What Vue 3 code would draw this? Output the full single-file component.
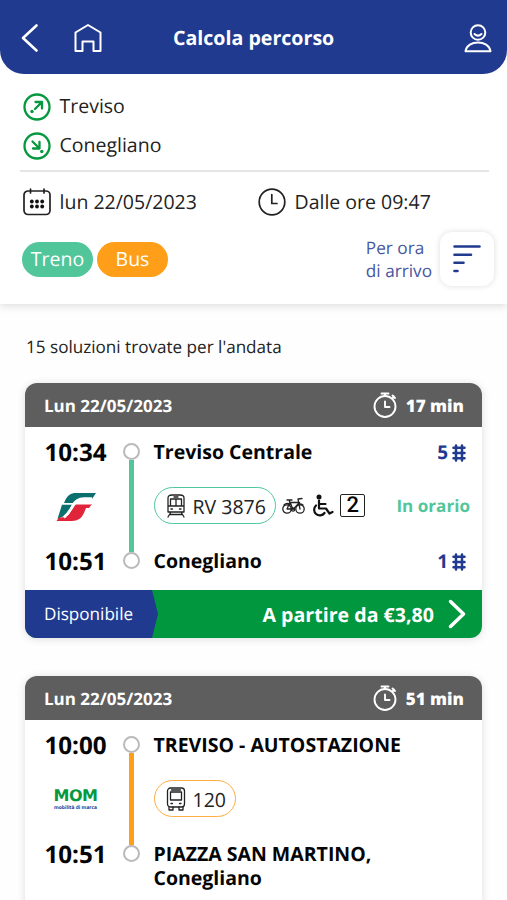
<script setup>
const trips = [
  {
    kind: 'train',
    duration: '17 min',
    start: '10:34',
    end: '10:51',
    from: 'Treviso Centrale',
    to: ['Conegliano'],
    line: 'RV 3876',
    fromTrack: '5',
    toTrack: '1',
    status: 'In orario',
    price: 'A partire da €3,80',
  },
  {
    kind: 'bus',
    duration: '51 min',
    start: '10:00',
    end: '10:51',
    from: 'TREVISO - AUTOSTAZIONE',
    to: ['PIAZZA SAN MARTINO,', 'Conegliano'],
    line: '120',
  },
]
</script>

<template>
  <div class="screen">
    <header class="topbar">
      <svg class="back" width="18" height="30" viewBox="0 0 18 30"><path d="M15.500 2.500 2 15l13.500 12.500" /></svg>
      <svg class="home" width="30" height="30" viewBox="0 0 30 30"><path d="M2.500 9.500 15 2l12.500 7.500V28h-7V18.500h-11V28h-7z" /></svg>
      <h1>Calcola percorso</h1>
      <svg class="user" width="30" height="30" viewBox="0 0 30 30">
        <circle cx="15" cy="9.500" r="7.300" />
        <path d="M11.500 11q3.500 3.200 7 0M2.500 28.200C3.500 22.500 9 19.500 15 19.500s11.500 3 12.500 8.700z" />
      </svg>
    </header>

    <section class="search">
      <div class="place">
        <svg class="dir" width="28" height="28" viewBox="0 0 28 28">
          <circle cx="14" cy="14" r="12.500" />
          <path d="m12 16 6.500-6.500M12.500 9h6.500v6.500" /><circle class="dot" cx="9" cy="18.500" r="1.700" />
        </svg>
        <span>Treviso</span>
      </div>
      <div class="place">
        <svg class="dir" width="28" height="28" viewBox="0 0 28 28">
          <circle cx="14" cy="14" r="12.500" />
          <path d="m9.500 9.500 6.500 6.500M16.500 10v6.500H10" /><circle class="dot" cx="18.800" cy="19.500" r="1.700" />
        </svg>
        <span>Conegliano</span>
      </div>
      <div class="when">
        <div class="date">
          <svg class="outline" width="28" height="28" viewBox="0 0 28 28">
            <rect x="1" y="3" width="26" height="23.500" rx="4" /><path d="M7.500 1v4M21 1v4" />
            <g class="dots"><circle v-for="n in 6" :key="n" :cx="8.800 + ((n - 1) % 3) * 5.200" :cy="n > 3 ? 18.500 : 13.500" r="1.900" /></g>
          </svg>
          <span>lun 22/05/2023</span>
        </div>
        <div class="time">
          <svg class="outline" width="28" height="28" viewBox="0 0 28 28"><circle cx="14" cy="14" r="12.800" /><path d="M13.800 6.500v9H19" /></svg>
          <span>Dalle ore 09:47</span>
        </div>
      </div>
      <div class="filters">
        <span class="chip green">Treno</span>
        <span class="chip orange">Bus</span>
        <span class="sort-text">Per ora<br />di arrivo</span>
        <button class="sort" aria-label="Ordina">
          <svg width="28" height="28" viewBox="0 0 28 28"><path d="M1.500 1.500h25M1.500 9.800h16.500M1.500 17.800h9M1.500 26h3" /></svg>
        </button>
      </div>
    </section>

    <p class="count">15 soluzioni trovate per l'andata</p>

    <article v-for="trip in trips" :key="trip.start" class="card" :class="trip.kind">
      <div class="card-head">
        <span>Lun 22/05/2023</span>
        <svg class="watch" width="24" height="26" viewBox="0 0 24 26"><circle cx="12" cy="14.500" r="10.500" /><path d="M12 9.500v5.500h4.500M8.500 1.500h7M12 1.500V4M19.500 3.500l2.500 2.500M21 4.500l-1.500 1.800" /></svg>
        <b>{{ trip.duration }}</b>
      </div>
      <div class="journey">
        <div class="left">
          <b>{{ trip.start }}</b>
          <svg v-if="trip.kind === 'train'" class="fs" width="42" height="30" viewBox="0 0 42 30">
            <path fill="#0b6f6d" d="M18 1H40L36 7H27Q21 7 18 11H8Q11 2 18 1z" />
            <path fill="#0b6f6d" d="M6 12.500H16Q12 20 7 24.500L1.500 27z" />
            <path fill="#e0243a" d="M20 12H36L33 16H30L28 21Q24.500 29 16 29H.500L3 25.500Q11 26 14 20.500z" />
            <path d="M36 6.500H28Q20 6.500 17 13.500T8 25.500" stroke="#fff" stroke-width="2.400" stroke-linecap="butt" />
            <path d="M6 11.700H35" stroke="#fff" stroke-width="1.500" />
          </svg>
          <div v-else class="mom"><b>MOM</b><i>mobilità di marca</i></div>
          <b>{{ trip.end }}</b>
        </div>
        <div class="rail"><i></i><span></span><i></i></div>
        <div class="details">
          <div class="stop">
            <b>{{ trip.from }}</b>
            <span v-if="trip.fromTrack" class="track">{{ trip.fromTrack }}<svg width="14" height="18" viewBox="0 0 14 18"><path d="M4 1.500v15M10 1.500v15M1.500 3.800h11M1.500 9h11M1.500 14.200h11" /></svg></span>
          </div>
          <div class="service">
            <span class="line">
              <svg width="20" height="24" viewBox="0 0 20 24">
                <template v-if="trip.kind === 'train'">
                  <path d="M2 18V4q0-3 4-3h8q4 0 4 3v14zM2.500 12h15M4.500 5h11v7M10 5v7M4.500 5v7M8 3h4M5 18l-3 5M15 18l3 5M4 20.500h12" />
                  <path d="M5 15h1.500M13.500 15H15" />
                </template>
                <template v-else>
                  <rect x="1.500" y="1" width="17" height="19" rx="3" /><rect x="4.500" y="5" width="11" height="8" />
                  <path d="M5.500 3h9M3 20v3h4v-3M13 20v3h4v-3" /><path d="M5 16.500h1.500M13.500 16.500H15" />
                </template>
              </svg>
              <span>{{ trip.line }}</span>
            </span>
            <template v-if="trip.kind === 'train'">
              <svg class="bike" width="23" height="20" viewBox="0 0 23 20"><circle cx="5" cy="13" r="4.200" /><circle cx="18" cy="13" r="4.200" /><circle cx="11" cy="13.500" r="1.700" /><path d="m5 13 3-7 3 7.500 6.500-7H8M5 13h6M18 13 16 3l4-.5M5 4h5M7.500 4v2M2 9q3-3 7 0M15 9q3-2 6 0" /></svg>
              <svg class="wheel" width="23" height="24" viewBox="0 0 23 24"><circle class="solid" cx="8" cy="3" r="2.500" /><path d="M8 6.500v8h7l3.500 5 3-1.500M8 10h6.500M5 11.500a5.700 5.700 0 1 0 8.500 7.500" /></svg>
              <span class="second">2</span>
              <b class="status">{{ trip.status }}</b>
            </template>
          </div>
          <div class="stop">
            <div class="destination"><b v-for="part in trip.to" :key="part">{{ part }}</b></div>
            <span v-if="trip.toTrack" class="track">{{ trip.toTrack }}<svg width="14" height="18" viewBox="0 0 14 18"><path d="M4 1.500v15M10 1.500v15M1.500 3.800h11M1.500 9h11M1.500 14.200h11" /></svg></span>
          </div>
        </div>
      </div>
      <div v-if="trip.price" class="buy">
        <span class="available">Disponibile</span>
        <b>{{ trip.price }}</b>
        <svg width="18" height="30" viewBox="0 0 18 30"><path d="m2.500 2.500 13 12.500-13 12.500" /></svg>
      </div>
    </article>
  </div>
</template>

<style>
body { overflow: hidden; background: #fff; }
</style>

<style scoped>
* { box-sizing: border-box; }
.screen { width: 507px; height: 900px; overflow: hidden; background: #fefefe; color: #222; font-family: "Open Sans", sans-serif; text-rendering: geometricPrecision; }
svg { display: block; flex: none; fill: none; stroke-linecap: round; stroke-linejoin: round; }
.search { height: 304px; margin-top: -74px; padding: 87px 18px 0 20px; background: #fff; box-shadow: 0 2px 8px #0002; font-size: 19.500px; }
.topbar { position: relative; height: 74px; padding: 1px 14px 0 21px; display: flex; align-items: center; background: #203a8f; color: #fff; border-radius: 0 0 24px 24px; }
.topbar svg { stroke: #fff; stroke-width: 2; }
.topbar .back { stroke-width: 2.600; }
.home { margin-left: 34px; }
h1 { margin: 0 auto 0 70px; font-size: 19.600px; line-height: 26px; }
.place { height: 39px; display: flex; align-items: center; gap: 8.500px; padding-left: 3px; }
.place span { position: relative; top: -1px; }
.dir { stroke: #06983f; stroke-width: 2.300; }
.dot { fill: #06983f; stroke: none; }
.when { height: 61px; margin-top: 5px; border-top: 2px solid #e5e5e5; display: flex; align-items: center; }
.date, .time { display: flex; align-items: center; gap: 8.500px; padding-left: 3px; }
.date { width: 235px; }
.outline { stroke: #222; stroke-width: 1.700; }
.dots { fill: #111; stroke: none; }
.filters { height: 54px; margin-top: 1px; display: flex; align-items: center; padding-left: 2px; }
.chip { width: 71px; height: 35px; border-radius: 18px; text-align: center; line-height: 34px; color: #fff; margin-right: 4px; }
.green { background: #51c69b; }
.orange { background: #ff9e18; }
.sort-text { margin-left: auto; padding-top: 2px; color: #4658a0; font-size: 17.200px; line-height: 23px; }
.sort { width: 54px; height: 54px; margin-left: 8px; margin-right: -5px; padding: 0; display: grid; place-items: center; border: 0; border-radius: 12px; background: #fff; box-shadow: 0 0 6px #0002; }
.sort svg { stroke: #203a8f; stroke-width: 2.600; }
.count { margin: 32px 0 23px 26px; font-size: 17.100px; line-height: 24px; }
.card { width: 457px; margin: 0 0 38px 25px; border-radius: 12px; background: #fff; overflow: hidden; box-shadow: 0 1px 8px #0002; color: #050505; }
.train { height: 255px; }
.bus { height: 300px; }
.card-head { height: 44px; display: flex; align-items: center; padding: 0 18px 0 19px; color: #fff; background: #5e5e5e; font-size: 17px; font-weight: 700; }
.watch { margin-left: auto; margin-right: 9px; stroke: #fff; stroke-width: 1.900; }
.journey { height: 163px; padding-left: 19px; display: flex; }
.left { width: 63px; display: flex; flex-direction: column; align-items: center; font-size: 24.200px; line-height: 34px; padding: 9px 0 11.500px; justify-content: space-between; }
.fs { margin-left: 2px; }
.mom { width: 44px; height: 22px; display: flex; flex-direction: column; align-items: center; justify-content: space-between; }
.mom b { height: 14px; color: #06983f; font: 700 16px/14px "DejaVu Sans", sans-serif; letter-spacing: -0.500px; }
.mom i { height: 6px; white-space: nowrap; color: #203a8f; font: 700 4.900px/6px "Open Sans", sans-serif; }
.rail { width: 18px; margin-left: 15.500px; padding: 16px 0 21px; display: flex; flex-direction: column; align-items: center; }
.rail i { width: 17px; height: 17px; border: 2px solid #bababa; border-radius: 50%; }
.rail span { width: 5px; flex: 1; background: #51c69b; }
.bus .rail span { background: #ff9e18; }
.details { flex: 1; padding: 13px 12px 0 13px; font-size: 19.500px; line-height: 24px; }
.stop { height: 24px; display: flex; justify-content: space-between; white-space: nowrap; }
.destination b { display: block; height: 24px; }
.track { display: flex; align-items: center; gap: 4px; padding-right: 4px; color: #203a8f; font-weight: 700; font-size: 19px; }
.track svg { margin-top: 1px; stroke: #203a8f; stroke-width: 2.500; }
.service { height: 37px; margin: 23px 0 25px; display: flex; align-items: center; }
.line { height: 37px; display: flex; align-items: center; gap: 7px; padding: 0 9.500px 0 11px; border: 1.500px solid #51c69b; border-radius: 20px; font-size: 19.500px; white-space: nowrap; color: #222; }
.line span { position: relative; top: 1px; }
.bus .line { border-color: #ffad42; }
.line svg, .bike { stroke: #222; stroke-width: 1.300; }
.bike { margin-left: 6px; }
.wheel { margin-left: 6px; stroke: #111; stroke-width: 2.200; }
.solid { fill: #111; stroke: none; }
.second { width: 25px; height: 23px; margin-left: 6px; border: 1.500px solid #222; border-radius: 2px; text-align: center; font: 500 22px/22px Roboto, sans-serif; }
.status { margin-left: auto; padding-top: 2px; color: #51c69b; font-size: 17.100px; }
.buy { height: 48px; display: flex; align-items: center; padding-right: 16px; color: #fff; background: #00973f; }
.available { width: 133px; height: 48px; padding-left: 19px; line-height: 50px; font-size: 17.100px; background: #203a8f; clip-path: polygon(0 0, 127px 0, 133px 50%, 127px 100%, 0 100%); }
.buy b { margin-left: auto; font-size: 19.600px; }
.buy svg { margin-left: 14px; stroke: #fff; stroke-width: 3.500; }
</style>
